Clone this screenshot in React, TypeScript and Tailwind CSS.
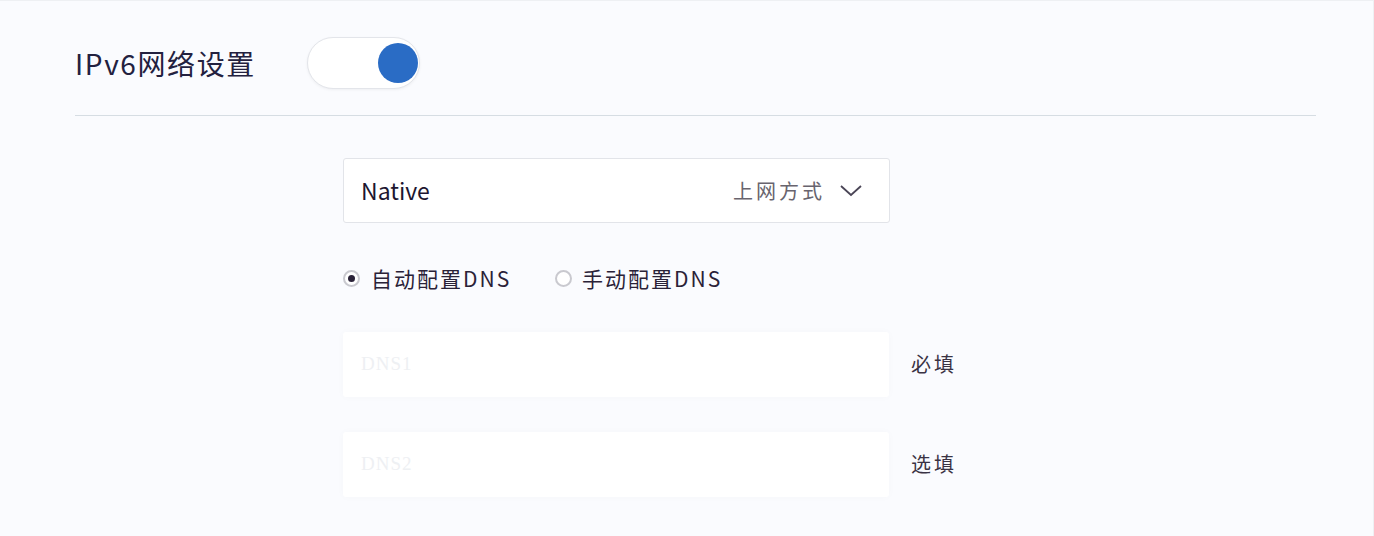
import React from "react";

const font = { fontFamily: '"Noto Sans CJK SC", "Noto Sans", sans-serif' };

function Radio({ checked }: { checked: boolean }) {
  return (
    <span className="flex h-[17px] w-[17px] items-center justify-center rounded-full border-2 border-[#c9c9cf] bg-white">
      {checked && <span className="h-[7px] w-[7px] rounded-full bg-[#2a2238]" />}
    </span>
  );
}

function DnsInput({ placeholder, hint }: { placeholder: string; hint: string }) {
  return (
    <div className="flex items-center">
      <div className="flex h-[65px] w-[546px] items-center rounded-[3px] bg-white px-[18px] shadow-[0_0_8px_rgba(30,40,80,0.025)]">
        <span className="text-[19px] tracking-[1px] text-[#eef0f3]" style={{ fontFamily: '"Liberation Serif", serif' }}>
          {placeholder}
        </span>
      </div>
      <span className="ml-[22px] text-[20px] tracking-[3px] text-[#3a3344]">{hint}</span>
    </div>
  );
}

export default function App() {
  return (
    <div className="h-[536px] w-full overflow-hidden bg-[#f9fafd]" style={font}>
      <div className="h-full border-t border-r border-[#eef0f3] bg-[#fafbfe]">
        <div className="flex items-center pl-[75px] pt-[36px]">
          <span className="w-[180px] whitespace-nowrap text-[28px] leading-none tracking-[1.6px] text-[#23213f]">IPv6网络设置</span>
          <div className="ml-[52px] flex h-[52px] w-[113px] items-center justify-end rounded-full border border-[#e3e5ea] bg-white pr-[1px] shadow-[0_1px_3px_rgba(0,0,0,0.05)]">
            <span className="h-[40px] w-[40px] rounded-full bg-[#2a6cc5]" />
          </div>
        </div>
        <div className="ml-[75px] mr-[57px] mt-[26px] h-px bg-[#d6dde3]" />
        <div className="ml-[343px] flex flex-col">
          <div className="mt-[42px] flex h-[65px] w-[547px] items-center rounded-[3px] border border-[#e2e4e9] bg-white pl-[17px] pr-[26px]">
            <span className="text-[23px] text-[#1d1630]">Native</span>
            <span className="ml-auto text-[20px] tracking-[3px] text-[#68646e]">上网方式</span>
            <svg className="ml-[14px]" width="24" height="14" viewBox="0 0 24 14" fill="none">
              <path d="M2 2 L12 11 L22 2" stroke="#4a4556" strokeWidth="1.8" />
            </svg>
          </div>
          <div className="mt-[40px] flex items-center">
            <Radio checked />
            <span className="w-[195px] whitespace-nowrap pl-[11px] text-[21px] tracking-[2px] text-[#2a2238]">自动配置DNS</span>
            <Radio checked={false} />
            <span className="ml-[10px] text-[21px] tracking-[2px] text-[#2a2238]">手动配置DNS</span>
          </div>
          <div className="mt-[37px]">
            <DnsInput placeholder="DNS1" hint="必填" />
          </div>
          <div className="mt-[35px]">
            <DnsInput placeholder="DNS2" hint="选填" />
          </div>
        </div>
      </div>
    </div>
  );
}
